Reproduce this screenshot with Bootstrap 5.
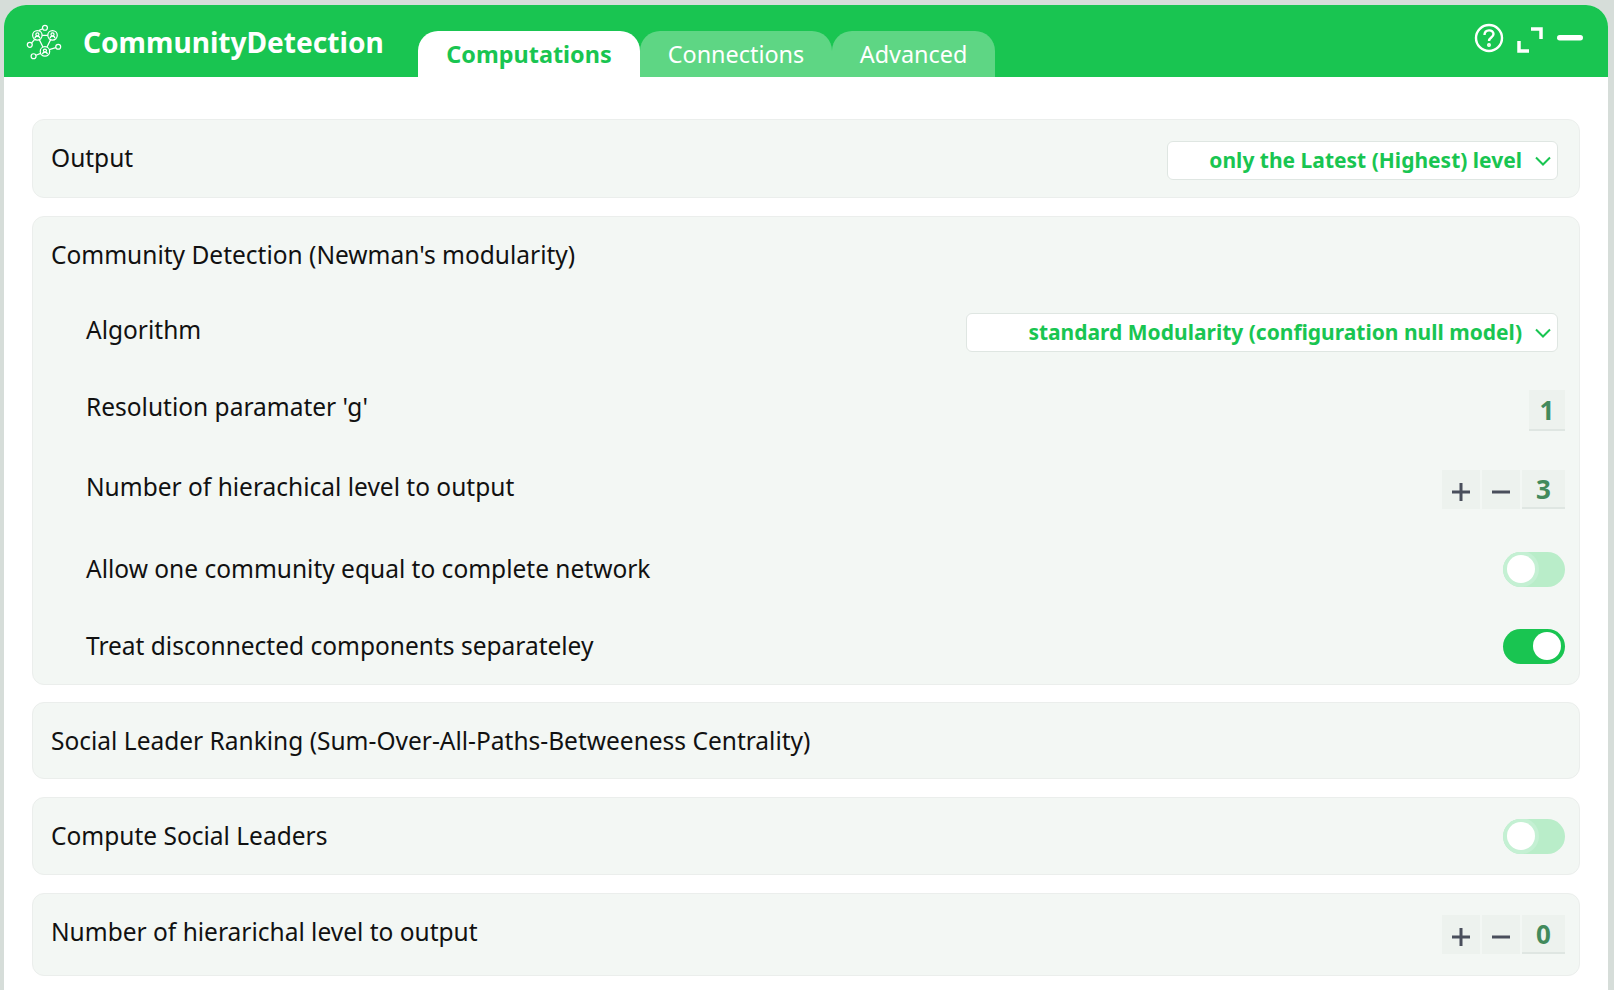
<!DOCTYPE html>
<html lang="en">
<head>
<meta charset="utf-8">
<title>CommunityDetection</title>
<link href="https://cdn.jsdelivr.net/npm/bootstrap@5.3.0/dist/css/bootstrap.min.css" rel="stylesheet">
<style>
html,body{height:100%;overflow:hidden}
body{background:#d6ddd9;font-family:"Noto Sans",sans-serif;color:#111;font-size:24.5px}
.shell{margin:5px 6px 0 4px;height:985px;background:#fff;border-radius:22px 22px 0 0;overflow:hidden}
.head{height:72px;background:#19c551;color:#fff}
.logo{margin-left:22px;width:36px;height:36px;margin-top:19px;flex:none}
.title{font-size:28.100px;font-weight:700;margin-left:21px;width:335px;flex:none;margin-top:14px;line-height:46px;white-space:nowrap}
.tabs{height:46px;margin-top:26px}
.tb{height:46px;line-height:46px;font-size:23.4px;text-align:center;border-radius:20px 20px 0 0;background:#5ed684;color:#fff}
.tb.on{background:#fff;color:#19c551;font-weight:700}
.t1{width:222px}.t2{width:192px}.t3{width:163px}
.tools{margin-left:auto;margin-right:25px;margin-top:18px;gap:12px;height:38px}
.mn{margin-left:1px}
.box{margin:42px 28px 0 28px;display:flex;flex-direction:column}
.pane{background:#f3f7f4;border:1px solid #ebeeec;border-radius:12px;padding:0 14px 0 18px;margin-bottom:18px}
.one{display:flex;align-items:center;justify-content:space-between}
.lab{line-height:36px}
.up{margin-bottom:2px}
.up2{margin-bottom:6px}
.dn{margin-top:4px}
.dn2{margin-top:6px}
.sel{display:flex;align-items:center;justify-content:flex-end;background:#fff;border:1px solid #dfe6e2;border-radius:6px;height:39px;color:#19c551;font-weight:700;font-size:21px;margin-right:7px;padding:0 5px 0 0}
.sel svg{margin-left:13px;margin-right:1px}
.s1{width:391px}.s2{width:592px}
.sub{display:flex;align-items:center;justify-content:space-between;padding-left:35px}
.val{background:#edf2ee;color:#428a5c;font-weight:700;font-size:26px;text-align:center;border-bottom:2px solid #dfe6e2}
.v1{width:36px;height:41px;line-height:41px}
.v3{width:43px;height:39px;line-height:39px}
.st{background:#edf2ee;color:#4a4f5c;height:39px;width:38px;margin-right:2px;display:flex;align-items:center;justify-content:center}
.st svg{margin-top:5px}
.sw{width:62px;height:35px;border-radius:18px;padding:3px 4px;display:flex;overflow:hidden}
.sw i{display:block;width:28px;height:28px;border-radius:50%;background:#fff}
.sw.off{background:#b9edc9;justify-content:flex-start}
.sw.off i{box-shadow:0 0 0 4px #c4f0d3}
.sw.ong{background:#19c551;justify-content:flex-end}
</style>
</head>
<body>
<div class="shell">
  <div class="head d-flex">
    <svg class="logo" viewBox="0 0 38 38" fill="none" stroke="#fff" stroke-width="1.3" aria-hidden="true">
      <circle cx="12" cy="12" r="5"/><circle cx="28" cy="12" r="5"/><circle cx="20" cy="29" r="5"/>
      <path d="M17 12h6M14 16.500l4 8M26 16.500l-4 8"/>
      <circle cx="20" cy="4" r="2.600"/><path d="M17.500 5l-4 2"/>
      <circle cx="4" cy="22" r="2.600"/><path d="M6 20l3-3.500"/>
      <circle cx="34" cy="24" r="2.600"/><path d="M31.500 25l-7 2"/>
      <circle cx="8" cy="34" r="2.600"/><path d="M10.500 33l5-2"/>
      <circle cx="12" cy="11" r="1.600"/><path d="M9.500 15c0-3 5-3 5 0"/>
      <circle cx="28" cy="11" r="1.600"/><path d="M25.500 15c0-3 5-3 5 0"/>
      <circle cx="20" cy="28" r="1.600"/><path d="M17.500 32c0-3 5-3 5 0"/>
    </svg>
    <div class="title">CommunityDetection</div>
    <div class="tabs d-flex">
      <div class="tb on t1">Computations</div>
      <div class="tb t2">Connections</div>
      <div class="tb t3">Advanced</div>
    </div>
    <div class="tools d-flex align-items-start">
      <svg width="30" height="30" viewBox="0 0 30 30" fill="none" stroke="#fff" stroke-width="2.400" aria-hidden="true"><circle cx="15" cy="15" r="13"/><path d="M10.500 12c0-6 9-6 9-1 0 3.500-4.500 3.500-4.500 7"/><circle cx="15" cy="22" r=".8"/></svg>
      <svg width="28" height="28" viewBox="0 0 28 28" fill="none" stroke="#fff" stroke-width="3.500" aria-hidden="true" style="margin-top:3px"><path d="M15 3h10v10M3 15v10h10"/></svg>
      <svg class="mn" width="26" height="28" viewBox="0 0 26 28" fill="#fff" aria-hidden="true"><rect y="12" width="26" height="5.500" rx="2.700"/></svg>
    </div>
  </div>
  <div class="box">
    <div class="pane one" style="height:79px">
      <div class="lab up">Output</div>
      <div class="sel s1 dn">only the Latest (Highest) level<svg width="16" height="10" viewBox="0 0 16 10" fill="none" stroke="#19c551" stroke-width="2"><path d="M1 1.500l7 7 7-7"/></svg></div>
    </div>
    <div class="pane" style="height:469px;margin-bottom:17px">
      <div class="lab" style="margin-top:20px">Community Detection (Newman's modularity)</div>
      <div class="sub" style="margin-top:36px">
        <div class="lab up">Algorithm</div>
        <div class="sel s2 dn">standard Modularity (configuration null model)<svg width="16" height="10" viewBox="0 0 16 10" fill="none" stroke="#19c551" stroke-width="2"><path d="M1 1.500l7 7 7-7"/></svg></div>
      </div>
      <div class="sub" style="margin-top:32px">
        <div class="lab up">Resolution paramater 'g'</div>
        <div class="val v1 dn2">1</div>
      </div>
      <div class="sub" style="margin-top:35px">
        <div class="lab up">Number of hierachical level to output</div>
        <div class="d-flex dn">
          <div class="st"><svg width="18" height="18" viewBox="0 0 18 18" fill="none" stroke="currentColor" stroke-width="3"><path d="M9 0v18M0 9h18"/></svg></div>
          <div class="st"><svg width="18" height="18" viewBox="0 0 18 18" fill="none" stroke="currentColor" stroke-width="3"><path d="M0 9h18"/></svg></div>
          <div class="val v3">3</div>
        </div>
      </div>
      <div class="sub" style="margin-top:42px">
        <div class="lab">Allow one community equal to complete network</div>
        <div class="sw off"><i></i></div>
      </div>
      <div class="sub" style="margin-top:41px">
        <div class="lab">Treat disconnected components separateley</div>
        <div class="sw ong"><i></i></div>
      </div>
    </div>
    <div class="pane one" style="height:77px">
      <div class="lab">Social Leader Ranking (Sum-Over-All-Paths-Betweeness Centrality)</div>
    </div>
    <div class="pane one" style="height:78px">
      <div class="lab">Compute Social Leaders</div>
      <div class="sw off"><i></i></div>
    </div>
    <div class="pane one" style="height:83px">
      <div class="lab up2">Number of hierarichal level to output</div>
      <div class="d-flex">
        <div class="st"><svg width="18" height="18" viewBox="0 0 18 18" fill="none" stroke="currentColor" stroke-width="3"><path d="M9 0v18M0 9h18"/></svg></div>
        <div class="st"><svg width="18" height="18" viewBox="0 0 18 18" fill="none" stroke="currentColor" stroke-width="3"><path d="M0 9h18"/></svg></div>
        <div class="val v3">0</div>
      </div>
    </div>
  </div>
</div>
<script src="https://cdn.jsdelivr.net/npm/bootstrap@5.3.0/dist/js/bootstrap.bundle.min.js"></script>
</body>
</html>
